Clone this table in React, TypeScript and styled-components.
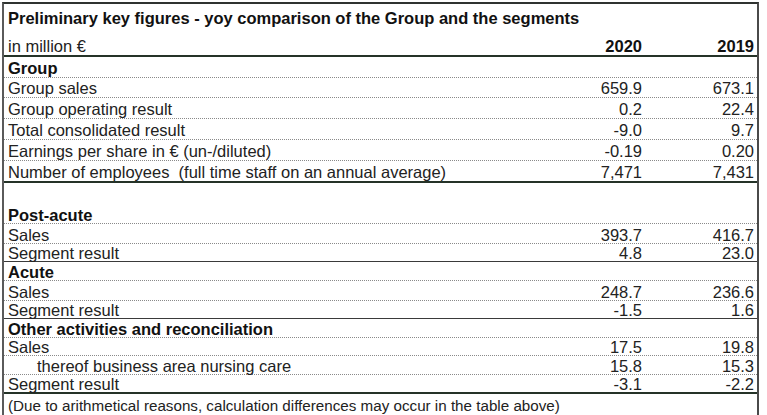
import React from "react";
import styled, { createGlobalStyle, css } from "styled-components";

type Line = "dotted" | "solid" | "thick" | "none";

type Item = {
  label: string;
  a?: string;
  b?: string;
  h: number;
  line: Line;
  pb?: number;
  bold?: boolean;
  indent?: boolean;
};

const GlobalStyle = createGlobalStyle`
  html, body {
    margin: 0;
    padding: 0;
    background: #ffffff;
  }
  body {
    font-family: "Liberation Sans", Arial, sans-serif;
    color: #1c1c1c;
  }
`;

const Sheet = styled.div`
  box-sizing: border-box;
  margin: 2px 0 0 2px;
  width: 757px;
  height: 413px;
  border-top: 2px solid #2f3330;
  border-left: 2px solid #5a5a5a;
  border-right: 2px solid #4a4a4a;
  background: #ffffff;
  overflow: hidden;
`;

const Title = styled.div`
  box-sizing: border-box;
  height: 27px;
  padding: 5px 0 0 4px;
  font-size: 16.5px;
  font-weight: bold;
  line-height: 18px;
  color: #111;
  white-space: nowrap;
`;

// bottom rule of each row
const lines = {
  dotted: css`
    border-bottom: 1px dotted #8a8a8a;
  `,
  solid: css`
    border-bottom: 1px solid #3a3a3a;
  `,
  thick: css`
    border-bottom: 2px solid #253328;
  `,
  none: css`
    border-bottom: 0;
  `,
};

// cells sit on the bottom of the row, like a spreadsheet
const Row = styled.div<{ $h: number; $line: Line; $pb: number }>`
  box-sizing: border-box;
  display: grid;
  grid-template-columns: 1fr 120px 115px;
  align-items: end;
  height: ${(p) => p.$h}px;
  padding-bottom: ${(p) => p.$pb}px;
  ${(p) => lines[p.$line]}
`;

const Label = styled.div<{ $bold?: boolean; $indent?: boolean }>`
  padding-left: ${(p) => (p.$indent ? 33 : 4)}px;
  font-size: 16.5px;
  font-weight: ${(p) => (p.$bold ? "bold" : "normal")};
  line-height: 16px;
  white-space: pre;
  color: ${(p) => (p.$bold ? "#111" : "#222")};
`;

const Num = styled.div<{ $bold?: boolean; $last?: boolean }>`
  text-align: right;
  padding-right: ${(p) => (p.$last ? 3 : 0)}px;
  font-size: 16.5px;
  font-weight: ${(p) => (p.$bold ? "bold" : "normal")};
  line-height: 16px;
  color: ${(p) => (p.$bold ? "#111" : "#222")};
`;

const Note = styled.div`
  box-sizing: border-box;
  height: 19px;
  padding: 4px 0 0 4px;
  font-size: 15.2px;
  line-height: 16px;
  color: #222;
  white-space: nowrap;
`;

const rows: Item[] = [
  { label: "in million €", a: "2020", b: "2019", h: 26, line: "thick", pb: 1 },
  { label: "Group", h: 21, line: "dotted", bold: true, pb: 1 },
  { label: "Group sales", a: "659.9", b: "673.1", h: 20, line: "dotted", pb: 1 },
  { label: "Group operating result", a: "0.2", b: "22.4", h: 21, line: "dotted", pb: 1 },
  { label: "Total consolidated result", a: "-9.0", b: "9.7", h: 21, line: "dotted", pb: 1 },
  { label: "Earnings per share in € (un-/diluted)", a: "-0.19", b: "0.20", h: 21, line: "dotted", pb: 1 },
  {
    label: "Number of employees  (full time staff on an annual average)",
    a: "7,471",
    b: "7,431",
    h: 22,
    line: "thick",
    pb: 1,
  },
  { label: "", h: 22, line: "none" },
  { label: "Post-acute", h: 19, line: "dotted", bold: true },
  { label: "Sales", a: "393.7", b: "416.7", h: 20, line: "dotted" },
  { label: "Segment result", a: "4.8", b: "23.0", h: 18, line: "solid" },
  { label: "Acute", h: 19, line: "dotted", bold: true },
  { label: "Sales", a: "248.7", b: "236.6", h: 20, line: "dotted" },
  { label: "Segment result", a: "-1.5", b: "1.6", h: 18, line: "solid" },
  { label: "Other activities and reconciliation", h: 19, line: "dotted", bold: true },
  { label: "Sales", a: "17.5", b: "19.8", h: 18, line: "dotted" },
  { label: "thereof business area nursing care", a: "15.8", b: "15.3", h: 19, line: "dotted", indent: true },
  { label: "Segment result", a: "-3.1", b: "-2.2", h: 19, line: "thick" },
];

export default function App() {
  return (
    <>
      <GlobalStyle />
      <Sheet>
        <Title>Preliminary key figures - yoy comparison of the Group and the segments</Title>
        {rows.map((r, i) => {
          const head = i === 0;
          return (
            <Row key={i} $h={r.h} $line={r.line} $pb={r.pb ?? 0}>
              <Label $bold={r.bold} $indent={r.indent}>
                {r.label}
              </Label>
              <Num $bold={head}>{r.a}</Num>
              <Num $bold={head} $last>
                {r.b}
              </Num>
            </Row>
          );
        })}
        <Note>(Due to arithmetical reasons, calculation differences may occur in the table above)</Note>
      </Sheet>
    </>
  );
}
